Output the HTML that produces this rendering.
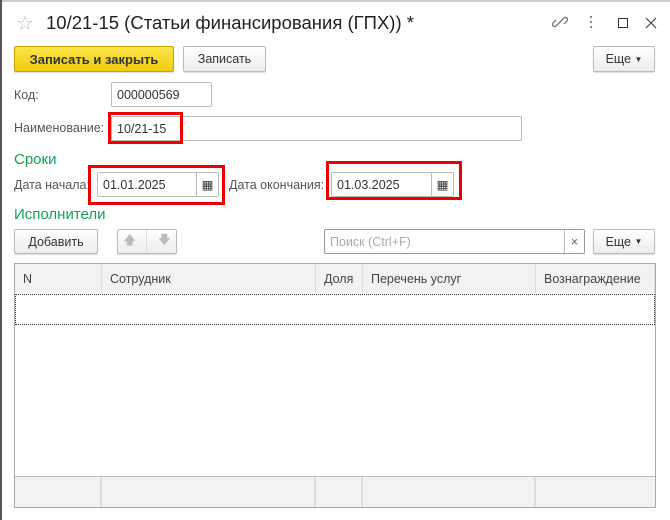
<!DOCTYPE html>
<html><head><meta charset="utf-8"><style>
*{box-sizing:border-box}
body{margin:0;width:670px;height:520px;background:#fff;font-family:"Liberation Sans",sans-serif;font-size:12px;color:#444;position:relative;overflow:hidden}
.a{position:absolute}
.btn{position:absolute;border:1px solid #bbb;border-radius:2px;background:linear-gradient(#fff,#ececec);box-shadow:0 1px 1px rgba(0,0,0,.15);display:flex;align-items:center;justify-content:center;color:#333;font-size:12.5px}
.fld{position:absolute;border:1px solid #bbb;border-radius:2px;background:#fff;padding-left:5px;display:flex;align-items:center;color:#333;font-size:12.5px}
.red{position:absolute;border:3px solid #e00}
.lbl{position:absolute;color:#555;font-size:12.5px}
.grp{position:absolute;color:#14a05a;font-size:15px}
.cal{position:absolute;right:0;top:0;bottom:0;width:22px;border-left:1px solid #bbb;display:flex;align-items:center;justify-content:center}
.th{position:absolute;top:264px;height:29px;background:#f2f2f2;border-right:1px solid #ddd;padding:8px 0 0 8px;color:#444;font-size:12.5px}
.tf{position:absolute;top:477px;height:30px;background:#f2f2f2;border-right:2px solid #ddd}
</style></head><body>
<div class="a" style="left:0;top:0;width:2px;height:520px;background:#555"></div>
<div class="a" style="left:2px;top:0;width:668px;height:2px;background:#ccc"></div>
<div class="a" style="left:16px;top:11px;font-size:20px;color:#bbb">☆</div>
<div class="a" style="left:46px;top:12px;font-size:18.5px;color:#222">10/21-15 (Статьи финансирования (ГПХ)) *</div>
<svg class="a" style="left:552px;top:14px" width="16" height="16" viewBox="0 0 16 16" fill="none" stroke="#777" stroke-width="1.3"><path d="M7 9l-3 3a2 2 0 01-3-3l3-3M9 7l3-3a2 2 0 013 3l-3 3M6 10l4-4"/></svg>
<div class="a" style="left:590px;top:16px;width:2px;height:12px;background:repeating-linear-gradient(#888 0 2px,transparent 2px 5px)"></div>
<div class="a" style="left:618px;top:18px;width:10px;height:10px;border:1.5px solid #333"></div>
<svg class="a" style="left:645px;top:17px" width="12" height="12" viewBox="0 0 12 12" stroke="#444" stroke-width="1.2"><path d="M1 1l10 10M11 1L1 11"/></svg>
<div class="btn" style="left:14px;top:46px;width:160px;height:26px;background:linear-gradient(#fbe44a,#f0cd0c);border-color:#c8a800;font-weight:bold;color:#333;font-size:13px">Записать и закрыть</div>
<div class="btn" style="left:183px;top:46px;width:83px;height:26px">Записать</div>
<div class="btn" style="left:593px;top:46px;width:62px;height:26px">Еще&nbsp;<span style="font-size:8px">▼</span></div>
<div class="lbl" style="left:14px;top:88px">Код:</div>
<div class="fld" style="left:111px;top:82px;width:101px;height:25px">000000569</div>
<div class="lbl" style="left:14px;top:121px">Наименование:</div>
<div class="fld" style="left:111px;top:116px;width:411px;height:25px">10/21-15</div>
<div class="red" style="left:108px;top:112px;width:75px;height:32px"></div>
<div class="grp" style="left:14px;top:151px">Сроки</div>
<div class="lbl" style="left:14px;top:178px">Дата начала:</div>
<div class="fld" style="left:97px;top:172px;width:122px;height:25px">01.01.2025<div class="cal">▦</div></div>
<div class="red" style="left:88px;top:165px;width:137px;height:40px"></div>
<div class="lbl" style="left:229px;top:178px">Дата окончания:</div>
<div class="fld" style="left:331px;top:172px;width:123px;height:25px">01.03.2025<div class="cal">▦</div></div>
<div class="red" style="left:326px;top:161px;width:136px;height:39px"></div>
<div class="grp" style="left:14px;top:206px">Исполнители</div>
<div class="btn" style="left:14px;top:229px;width:84px;height:25px">Добавить</div>
<div class="btn" style="left:117px;top:229px;width:60px;height:25px;color:#bbb;justify-content:space-around">🡅<span style="border-left:1px solid #ddd;height:23px"></span>🡇</div>
<div class="fld" style="left:324px;top:229px;width:261px;height:25px;color:#aaa;border-color:#999">Поиск (Ctrl+F)<div class="cal" style="color:#666;width:20px">×</div></div>
<div class="btn" style="left:593px;top:229px;width:62px;height:25px">Еще&nbsp;<span style="font-size:8px">▼</span></div>
<div class="a" style="left:14px;top:263px;width:642px;height:245px;border:1px solid #aaa"></div>
<div class="th" style="left:15px;width:87px">N</div>
<div class="th" style="left:102px;width:214px">Сотрудник</div>
<div class="th" style="left:316px;width:47px">Доля</div>
<div class="th" style="left:363px;width:173px">Перечень услуг</div>
<div class="th" style="left:536px;width:119px">Вознаграждение</div>
<div class="a" style="left:15px;top:294px;width:640px;height:31px;border:1px dotted #333"></div>
<div class="a" style="left:15px;top:476px;width:640px;height:1px;background:#bbb"></div>
<div class="tf" style="left:15px;width:87px"></div>
<div class="tf" style="left:102px;width:214px"></div>
<div class="tf" style="left:316px;width:47px"></div>
<div class="tf" style="left:363px;width:173px"></div>
<div class="tf" style="left:536px;width:119px;border-right:none"></div>
</body></html>
